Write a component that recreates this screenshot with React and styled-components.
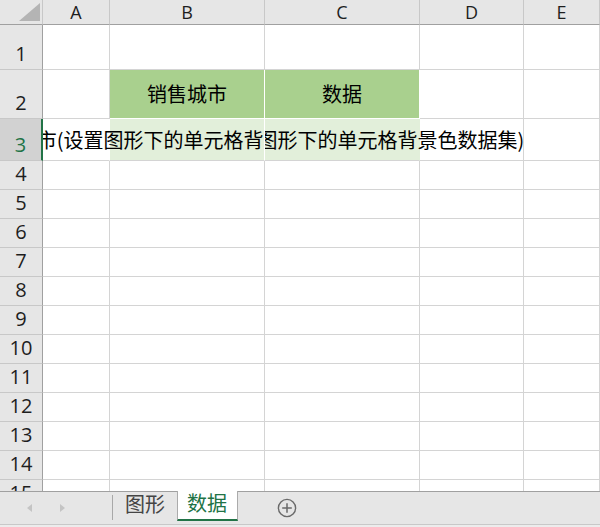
import React from "react";
import styled, { createGlobalStyle } from "styled-components";

const GlobalStyle = createGlobalStyle`
	html, body {
		margin: 0;
		padding: 0;
		background: #fff;
		overflow: hidden;
	}
	* {
		box-sizing: border-box;
	}
`;

const Window = styled.div`
	width: 600px;
	height: 527px;
	display: flex;
	flex-direction: column;
	background: #ececec;
	overflow: hidden;
`;

const Sheet = styled.div`
	flex: none;
	height: 491px;
	display: grid;
	grid-template-columns: 43px 67px 155px 155px 104px 1fr;
	grid-template-rows: 25px 45px 49px 42px repeat(12, 29px);
	overflow: hidden;
	background: #fff;
`;

const Corner = styled.div`
	grid-row: 1;
	grid-column: 1;
	background: #e6e6e6;
	border-right: 1px solid #c8c8c8;
	border-bottom: 1px solid #a0a0a0;
	display: flex;
	align-items: flex-end;
	justify-content: flex-end;
	padding: 0 2px 3px 0;
`;

const ColHead = styled.div`
	grid-row: 1;
	grid-column: ${p => p.$col};
	background: #e6e6e6;
	border-right: 1px solid #c8c8c8;
	border-bottom: 1px solid #a0a0a0;
	display: flex;
	align-items: center;
	justify-content: center;
	font: 18px "Open Sans", sans-serif;
	line-height: 1;
	color: #1e1e1e;
`;

const RowHead = styled.div`
	grid-row: ${p => p.$row};
	grid-column: 1;
	background: ${p => (p.$selected ? "#d2d2d2" : "#e6e6e6")};
	color: ${p => (p.$selected ? "#217346" : "#1e1e1e")};
	border-right: ${p => (p.$selected ? "2px solid #217346" : "1px solid #a0a0a0")};
	border-bottom: 1px solid #c8c8c8;
	display: flex;
	align-items: flex-end;
	justify-content: center;
	padding-bottom: 5px;
	font: 20px "Open Sans", sans-serif;
	line-height: 1;
`;

const Cell = styled.div`
	grid-row: ${p => p.$row};
	grid-column: ${p => p.$col};
	background: ${p => p.$fill || "#fff"};
	border-right: 1px solid
		${p => (p.$open ? "transparent" : p.$fill ? "#fff" : "#d4d4d4")};
	border-bottom: 1px solid ${p => p.$under || "#d4d4d4"};
	display: flex;
	align-items: center;
	justify-content: center;
	font: 20px "Noto Sans CJK SC", sans-serif;
	line-height: 1;
	color: #000;
	white-space: nowrap;
`;

/* text that spills over neighbouring empty cells, clipped by the filled one */
const Spill = styled.div`
	grid-row: ${p => p.$row};
	grid-column: ${p => p.$span};
	margin-right: ${p => (p.$clipRight ? "1px" : "0")};
	margin-bottom: 1px;
	overflow: hidden;
	display: flex;
	align-items: center;
	pointer-events: none;
`;

const SpillBox = styled.div`
	flex: none;
	width: ${p => p.$width}px;
	margin-left: ${p => p.$offset}px;
	display: flex;
	justify-content: center;
	font: 20px "Noto Sans CJK SC", sans-serif;
	line-height: 1;
	color: #000;
	white-space: nowrap;

	span {
		flex: none;
	}
`;

const TabBar = styled.div`
	flex: none;
	height: 34px;
	display: flex;
	align-items: flex-start;
	background: #e6e6e6;
	border-top: 1px solid #a0a0a0;
	border-bottom: 1px solid #c8c8c8;
`;

const Nav = styled.div`
	width: 112px;
	height: 100%;
	display: flex;
	align-items: center;
	gap: 28px;
	padding-left: 27px;
`;

const Arrow = styled.span`
	width: 0;
	height: 0;
	border-top: 4.5px solid transparent;
	border-bottom: 4.5px solid transparent;
	${p =>
		p.$dir === "left"
			? "border-right: 5px solid #c4c4c4;"
			: "border-left: 5px solid #c4c4c4;"}
`;

const Divider = styled.span`
	width: 1px;
	height: 25px;
	margin-top: 3px;
	background: #a8a8a8;
`;

const Tab = styled.div`
	height: ${p => (p.$active ? "30px" : "29px")};
	margin-top: ${p => (p.$active ? "-1px" : "0")};
	display: flex;
	align-items: center;
	padding: ${p => (p.$active ? "0 10px 5px 9px" : "0 12px 6px 12px")};
	font: 20px "Noto Sans CJK SC", sans-serif;
	line-height: 1;
	color: ${p => (p.$active ? "#217346" : "#444")};
	background: ${p => (p.$active ? "#fff" : "transparent")};
	border-left: ${p => (p.$active ? "1px solid #ababab" : "none")};
	border-right: ${p => (p.$active ? "1px solid #ababab" : "none")};
	border-bottom: ${p => (p.$active ? "2px solid #217346" : "none")};
`;

const AddSheet = styled.button`
	margin: 6px 0 0 39px;
	padding: 0;
	border: none;
	background: none;
	width: 20px;
	height: 20px;
	display: flex;
`;

const cols = ["A", "B", "C", "D", "E"];
const rowNums = Array.from({ length: 15 }, (_, i) => i + 1);

const HEAD = "#a9d08e";
const BODY = "#e2efda";

const cellProps = (r, c) => {
	if (r === 2 && (c === 2 || c === 3)) return { $fill: HEAD, $under: "#fff" };
	if (r === 3 && c === 2) return { $fill: BODY };
	if (r === 3 && c === 3) return { $fill: BODY, $open: true };
	if (r === 3 && c === 1) return { $open: true };
	return {};
};

const App = () => {
	return (
		<Window>
			<GlobalStyle />
			<Sheet>
				<Corner>
					<svg width="21" height="18" viewBox="0 0 21 18">
						<polygon points="21,0 21,18 0,18" fill="#b4b4b4" />
					</svg>
				</Corner>
				{cols.map((c, i) => (
					<ColHead key={c} $col={i + 2}>
						{c}
					</ColHead>
				))}

				{rowNums.map(r => (
					<React.Fragment key={r}>
						<RowHead $row={r + 1} $selected={r === 3}>
							{r}
						</RowHead>
						{cols.map((c, i) => (
							<Cell key={c} $row={r + 1} $col={i + 2} {...cellProps(r, i + 1)}>
								{r === 2 && i === 1 && "销售城市"}
								{r === 2 && i === 2 && "数据"}
							</Cell>
						))}
					</React.Fragment>
				))}

				<Spill $row={4} $span="2 / 4" $clipRight>
					<SpillBox $offset={53} $width={155}>
						<span>销售城市(设置图形下的单元格背景色数据集)</span>
					</SpillBox>
				</Spill>
				<Spill $row={4} $span="4 / 7">
					<SpillBox $offset={5} $width={155}>
						<span>数据(设置图形下的单元格背景色数据集)</span>
					</SpillBox>
				</Spill>
			</Sheet>

			<TabBar>
				<Nav>
					<Arrow $dir="left" />
					<Arrow $dir="right" />
				</Nav>
				<Divider />
				<Tab>图形</Tab>
				<Tab $active>数据</Tab>
				<AddSheet>
					<svg width="20" height="20" viewBox="0 0 20 20">
						<circle cx="10" cy="10" r="8.6" fill="none" stroke="#6a6a6a" strokeWidth="1.4" />
						<path d="M10 5.2v9.6M5.2 10h9.6" stroke="#6a6a6a" strokeWidth="1.5" />
					</svg>
				</AddSheet>
			</TabBar>
		</Window>
	);
};

export default App;
